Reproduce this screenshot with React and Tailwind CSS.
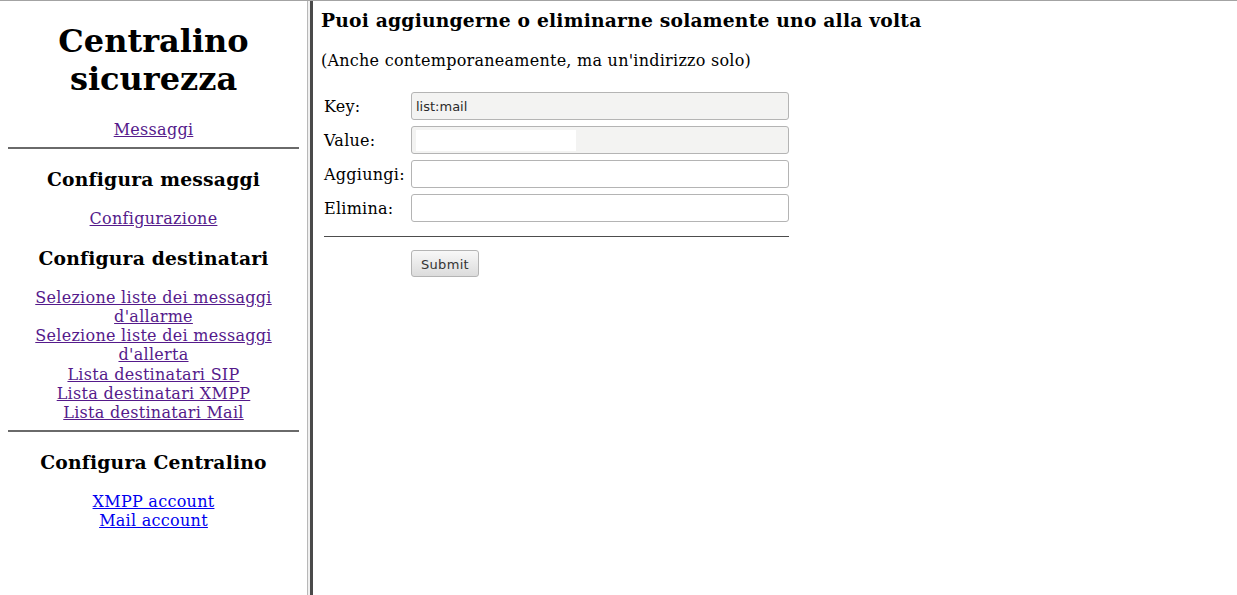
import React from 'react'

const serif = { fontFamily: '"DejaVu Serif", "Liberation Serif", serif' }

function NavLink({ children, visited = true }) {
  return (
    <a
      href="#"
      className={visited ? 'underline text-[#551a8b]' : 'underline text-[#0000ee]'}
    >
      {children}
    </a>
  )
}

function Field({ label, value, disabled, redacted }) {
  return (
    <div className="flex items-center h-[28px]">
      <div className="w-[90px] shrink-0 pl-[3px] text-[16px] tracking-[0.25px]">{label}</div>
      <div
        className={`w-[378px] h-[28px] rounded-[3px] border border-[#b4b4b4] flex items-center px-[4px] text-[13px] text-[#2a2a2a] font-['DejaVu_Sans',sans-serif] ${
          disabled ? 'bg-[#f3f3f2]' : 'bg-white'
        }`}
      >
        {value}
        {redacted && <span className="block w-[160px] h-[21px] bg-white" />}
      </div>
    </div>
  )
}

export default function App() {
  return (
    <div
      className="w-[1237px] h-[595px] flex border-t border-[#a3a3a3] bg-white text-black leading-[1.2] overflow-hidden"
      style={serif}
    >
      {/* Left frame: navigation */}
      <div className="w-[307px] shrink-0 px-2 text-center text-[16px] tracking-[0.28px]">
        <h1 className="text-[32px] font-bold mt-[20.5px] mb-[21.44px] leading-[1.2] tracking-normal">
          Centralino sicurezza
        </h1>
        <NavLink>Messaggi</NavLink>
        <hr className="my-2 border-0 border-t-2 border-[#6a6a6a]" />
        <h3 className="text-[18.72px] font-bold my-[18.72px] tracking-[0.2px]">Configura messaggi</h3>
        <NavLink>Configurazione</NavLink>
        <h3 className="text-[18.72px] font-bold my-[18.72px] tracking-[0.2px]">Configura destinatari</h3>
        <div>
          <NavLink>Selezione liste dei messaggi d'allarme</NavLink>
          <br />
          <NavLink>Selezione liste dei messaggi d'allerta</NavLink>
          <br />
          <NavLink>Lista destinatari SIP</NavLink>
          <br />
          <NavLink>Lista destinatari XMPP</NavLink>
          <br />
          <NavLink>Lista destinatari Mail</NavLink>
        </div>
        <hr className="my-2 border-0 border-t-2 border-[#6a6a6a]" />
        <h3 className="text-[18.72px] font-bold my-[18.72px] tracking-[0.2px]">Configura Centralino</h3>
        <NavLink visited={false}>XMPP account</NavLink>
        <br />
        <NavLink visited={false}>Mail account</NavLink>
      </div>

      {/* Frame border */}
      <div className="w-[6px] shrink-0 flex">
        <div className="w-[1px] bg-[#b8b8b8]" />
        <div className="w-[2px] bg-[#f0f0f0]" />
        <div className="w-[3px] bg-[#4a4a4a]" />
      </div>

      {/* Right frame: form */}
      <div className="flex-1 pt-[8px] px-2 text-[16px]">
        <h3 className="text-[18.72px] font-bold mb-[19.72px] tracking-[0.2px]">
          Puoi aggiungerne o eliminarne solamente uno alla volta
        </h3>
        <p className="mb-[22px] tracking-[0.25px]">(Anche contemporaneamente, ma un'indirizzo solo)</p>
        <div className="flex flex-col gap-[6px]">
          <Field label="Key:" value="list:mail" disabled />
          <Field label="Value:" disabled redacted />
          <Field label="Aggiungi:" />
          <Field label="Elimina:" />
        </div>
        <div className="ml-[3px] mt-[14px] w-[465px] border-t border-[#4d4d4d]" />
        <div className="pl-[90px] mt-[13px]">
          <button className="w-[68px] h-[27px] rounded-[3px] border border-[#b4b4b4] bg-gradient-to-b from-[#f8f8f8] to-[#dcdcdc] text-[13px] text-[#333] font-['DejaVu_Sans',sans-serif] tracking-[0.3px] pt-[2px]">
            Submit
          </button>
        </div>
      </div>
    </div>
  )
}
